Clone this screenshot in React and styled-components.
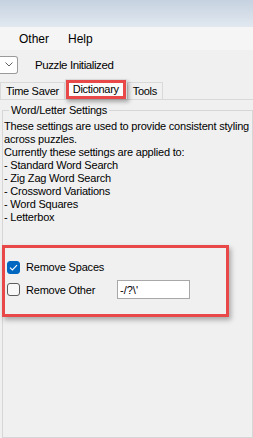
import React from "react";
import styled, { createGlobalStyle } from "styled-components";

const GlobalStyle = createGlobalStyle`
  html, body {
    margin: 0;
    padding: 0;
    background: #f0f0f0;
  }
`;

const Window = styled.div`
  width: 253px;
  height: 438px;
  background: #f0f0f0;
  display: flex;
  flex-direction: column;
  overflow: hidden;
  font-family: "Liberation Sans", Arial, sans-serif;
  color: #000;
`;

const TitleBar = styled.div`
  height: 27px;
  flex: none;
  background: linear-gradient(#c6d2e0, #e1e8f0);
`;

const MenuBar = styled.div`
  height: 23px;
  flex: none;
  background: #f5f5f5;
  display: flex;
  align-items: center;
  gap: 19px;
  padding-left: 19px;
  font-size: 12px;
`;

const Toolbar = styled.div`
  height: 29px;
  flex: none;
  display: flex;
  align-items: center;
  gap: 17px;
  font-size: 11.5px;
  letter-spacing: -0.4px;
`;

const Combo = styled.div`
  width: 18px;
  height: 18px;
  box-sizing: border-box;
  border: 1px solid #9a9a9a;
  border-left: none;
  border-radius: 0 3px 3px 0;
  background: #fff;
  display: flex;
  align-items: center;
  justify-content: center;
`;

const TabStrip = styled.div`
  height: 20px;
  flex: none;
  display: flex;
  align-items: flex-end;
  font-size: 11px;
  letter-spacing: -0.3px;
`;

const Tab = styled.div`
  position: relative;
  box-sizing: border-box;
  height: ${(p) => (p.$active ? 20 : 17)}px;
  line-height: ${(p) => (p.$active ? 18 : 16)}px;
  padding: 0 ${(p) => (p.$active ? 7 : 5)}px;
  margin: 0 ${(p) => (p.$active ? 0 : 0)}px;
  border: 1px solid #d9d9d9;
  border-bottom: none;
  background: ${(p) => (p.$active ? "#fbfbfb" : "#f0f0f0")};
  z-index: ${(p) => (p.$active ? 1 : 0)};
  box-shadow: ${(p) =>
    p.$marked
      ? "inset 0 0 0 3px #e84848, 2px 3px 4px rgba(0, 0, 0, 0.3)"
      : "none"};
`;

const Panel = styled.div`
  flex: 1;
  display: flex;
  flex-direction: column;
  border-top: 1px solid #d9d9d9;
  padding: 4px 0 0 2px;
  min-height: 0;
`;

const Group = styled.fieldset`
  flex: 1;
  margin: 0;
  padding: 3px 0 0 1px;
  min-width: 0;
  border: 1px solid #d6d6d6;
  font-size: 11px;
  letter-spacing: -0.2px;
`;

const Caption = styled.legend`
  margin-left: 5px;
  padding: 0 2px;
  line-height: 13px;
`;

const Description = styled.p`
  margin: 0;
  line-height: 13px;
  white-space: pre-line;
`;

const Options = styled.div`
  margin: 21px 0 0 -2px;
  width: 227px;
  box-sizing: border-box;
  border: 3px solid #e84848;
  box-shadow: 2px 3px 5px rgba(0, 0, 0, 0.3);
  padding: 9px 0 14px 2px;
  display: grid;
  grid-template-columns: 13px 85px 73px;
  grid-template-rows: 20px 21px;
  column-gap: 6px;
  row-gap: 2px;
  align-items: center;
`;

const Check = styled.span`
  width: 13px;
  height: 13px;
  box-sizing: border-box;
  border-radius: 3px;
  border: 1px solid ${(p) => (p.$checked ? "#0067c0" : "#5c5c5c")};
  background: ${(p) => (p.$checked ? "#0067c0" : "#f8f8f8")};
  display: flex;
  align-items: center;
  justify-content: center;
`;

const OptionLabel = styled.span`
  grid-column: ${(p) => (p.$span ? "2 / 4" : "auto")};
  white-space: nowrap;
`;

const TextField = styled.input`
  width: 73px;
  height: 19px;
  box-sizing: border-box;
  border: 1px solid #a8a8a8;
  background: #fff;
  padding: 0 2px;
  font-family: "Liberation Sans", Arial, sans-serif;
  font-size: 11px;
  color: #000;
  outline: none;
`;

const Tick = () => (
  <svg width="9" height="7" viewBox="0 0 9 7">
    <path d="M1 3.6 L3.4 6 L8 1.2" fill="none" stroke="#fff" strokeWidth="1.1" />
  </svg>
);

const Chevron = () => (
  <svg width="8" height="5" viewBox="0 0 8 5">
    <path d="M0.5 0.5 L4 4 L7.5 0.5" fill="none" stroke="#606060" strokeWidth="1" />
  </svg>
);

const description = `These settings are used to provide consistent styling
across puzzles.
Currently these settings are applied to:
- Standard Word Search
- Zig Zag Word Search
- Crossword Variations
- Word Squares
- Letterbox`;

const App = () => {
  return (
    <Window>
      <GlobalStyle />
      <TitleBar />
      <MenuBar>
        <span>Other</span>
        <span>Help</span>
      </MenuBar>
      <Toolbar>
        <Combo>
          <Chevron />
        </Combo>
        <span>Puzzle Initialized</span>
      </Toolbar>
      <TabStrip>
        <Tab>Time Saver</Tab>
        <Tab $active $marked>
          Dictionary
        </Tab>
        <Tab>Tools</Tab>
      </TabStrip>
      <Panel>
        <Group>
          <Caption>Word/Letter Settings</Caption>
          <Description>{description}</Description>
          <Options>
            <Check $checked>
              <Tick />
            </Check>
            <OptionLabel $span>Remove Spaces</OptionLabel>
            <Check />
            <OptionLabel>Remove Other</OptionLabel>
            <TextField readOnly defaultValue={"-/?\\'"} />
          </Options>
        </Group>
      </Panel>
    </Window>
  );
};

export default App;
